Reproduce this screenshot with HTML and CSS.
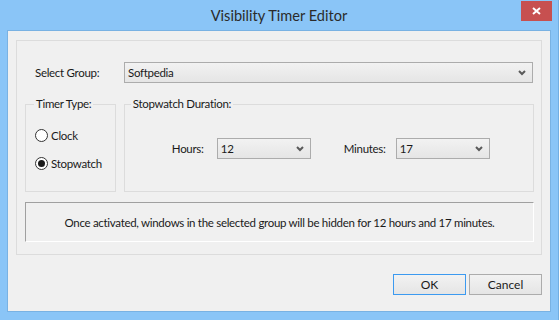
FILE: index.html
```html
<!DOCTYPE html>
<html lang="en">
<head>
    <meta charset="UTF-8">
    <title>Visibility Timer Editor</title>
    <link rel="stylesheet" href="styles.css">
</head>
<body>

<div class="window">
    <div class="titlebar">
        <span></span>
        <h1 class="title">Visibility Timer Editor</h1>
        <button class="close" type="button">
            <svg width="9" height="8" viewBox="0 0 9 8"><path d="M1 1 L8 7 M8 1 L1 7" stroke="#fff" stroke-width="2"/></svg>
        </button>
    </div>

    <div class="client">
        <div class="outer">
            <div class="row-group">
                <label class="group-label">Select Group:</label>
                <div class="combo combo-wide">
                    <span>Softpedia</span>
                    <svg width="8" height="6" viewBox="0 0 8 6"><path d="M1 1 L4 4 L7 1" fill="none" stroke="#5a5a5a" stroke-width="2"/></svg>
                </div>
            </div>

            <div class="row-boxes">
                <fieldset class="box box-type">
                    <legend>Timer Type:</legend>
                    <div class="box-body type-body">
                        <div class="radio"><span class="dot"></span>Clock</div>
                        <div class="radio"><span class="dot checked"></span>Stopwatch</div>
                    </div>
                </fieldset>

                <fieldset class="box box-duration">
                    <legend>Stopwatch Duration:</legend>
                    <div class="box-body duration">
                        <span class="lbl-hours">Hours:</span>
                        <div class="combo combo-small">
                            <span>12</span>
                            <svg width="8" height="6" viewBox="0 0 8 6"><path d="M1 1 L4 4 L7 1" fill="none" stroke="#5a5a5a" stroke-width="2"/></svg>
                        </div>
                        <span class="lbl-minutes">Minutes:</span>
                        <div class="combo combo-small">
                            <span>17</span>
                            <svg width="8" height="6" viewBox="0 0 8 6"><path d="M1 1 L4 4 L7 1" fill="none" stroke="#5a5a5a" stroke-width="2"/></svg>
                        </div>
                    </div>
                </fieldset>
            </div>

            <div class="info">
                <span class="watermark">SOFTPEDIA</span>
                <p>Once activated, windows in the selected group will be hidden for 12 hours and 17 minutes.</p>
            </div>
        </div>

        <div class="buttons">
            <button class="btn btn-default" type="button">OK</button>
            <button class="btn" type="button">Cancel</button>
        </div>
    </div>
</div>

</body>
</html>
```

FILE: styles.css
```css
/* Reset */
* {
    box-sizing: border-box;
    margin: 0;
    padding: 0;
}

body {
    font-family: 'Lato', 'Noto Sans', sans-serif;
    font-size: 11.5px;
    letter-spacing: -0.3px;
    color: #1a1a1a;
    background-color: #8ac5f7;
}

/* Ventana */
.window {
    width: 559px;
    height: 320px;
    background-color: #8ac5f7;
    border-right: 1px solid #72aee2;
    display: flex;
    flex-direction: column;
}

.titlebar {
    height: 30px;
    display: grid;
    grid-template-columns: 1fr auto 1fr;
}

.title {
    font-size: 14.6px;
    font-weight: normal;
    letter-spacing: 0;
    color: #2b2b2b;
    line-height: 30px;
    padding-top: 1px;
}

.close {
    justify-self: end;
    align-self: start;
    width: 31px;
    height: 20px;
    margin-top: 1px;
    margin-right: 6px;
    background-color: #c75050;
    border: none;
    display: flex;
    align-items: center;
    justify-content: center;
}

/* Area cliente */
.client {
    margin: 0 7px 8px 7px;
    height: 282px;
    background-color: #f0f0f0;
    border: 1px solid #79b2e3;
    display: flex;
    flex-direction: column;
}

.outer {
    margin: 9px 8px 0 8px;
    height: 215px;
    border: 1px solid #dcdcdc;
    padding: 21px 7px 0 8px;
}

.row-group {
    display: flex;
    align-items: center;
}

.group-label {
    width: 99px;
    padding-left: 10px;
}

/* Combos */
.combo {
    height: 21px;
    border: 1px solid #acacac;
    background: linear-gradient(#f2f2f2, #e5e5e5);
    display: flex;
    align-items: center;
    justify-content: space-between;
    padding: 0 6px 0 3px;
}

.combo span {
    padding-bottom: 1px;
}

.combo-wide {
    width: 409px;
}

.combo-small {
    width: 94px;
}

/* Grupos */
.row-boxes {
    display: flex;
    gap: 8px;
    margin-top: 13px;
}

.box {
    border: 1px solid #dcdcdc;
    height: 96px;
    min-width: 0;
    padding: 0;
}

.box legend {
    line-height: 16px;
    padding: 0 2px;
}

.box-type {
    width: 91px;
}

.box-type legend {
    margin-left: 8px;
}

.type-body {
    padding: 15px 0 0 9px;
}

.box-duration {
    width: 411px;
}

.box-duration legend {
    margin-left: 6px;
}

.radio {
    display: flex;
    align-items: center;
    height: 16px;
    margin-bottom: 12px;
}

.dot {
    width: 13px;
    height: 13px;
    border: 1px solid #333;
    border-radius: 50%;
    background-color: #fff;
    margin-right: 3px;
    display: flex;
    align-items: center;
    justify-content: center;
}

.dot.checked::after {
    content: "";
    width: 7px;
    height: 7px;
    border-radius: 50%;
    background-color: #1a1a1a;
}

.duration {
    display: flex;
    align-items: center;
    padding: 26px 0 0 47px;
}

.lbl-hours {
    width: 45px;
}

.lbl-minutes {
    width: 52px;
    margin-left: 33px;
}

/* Mensaje */
.info {
    position: relative;
    margin-top: 10px;
    width: 509px;
    height: 40px;
    border: 1px solid #a0a0a0;
    border-right-color: #fff;
    border-bottom-color: #fff;
    display: flex;
    align-items: center;
    justify-content: center;
}

.info p {
    position: relative;
    white-space: nowrap;
}

.watermark {
    position: absolute;
    left: 37px;
    top: 4px;
    font-family: 'DejaVu Sans', sans-serif;
    font-weight: bold;
    font-size: 30px;
    letter-spacing: 0;
    color: rgba(0, 0, 0, 0.025);
}

/* Botones */
.buttons {
    margin-top: auto;
    display: flex;
    justify-content: flex-end;
    gap: 3px;
    padding: 0 8px 16px 0;
}

.btn {
    width: 73px;
    height: 21px;
    font-family: inherit;
    font-size: 12px;
    letter-spacing: 0;
    color: #1a1a1a;
    border: 1px solid #acacac;
    background: linear-gradient(#f2f2f2, #e5e5e5);
}

.btn-default {
    border-color: #3c9af0;
}
```
